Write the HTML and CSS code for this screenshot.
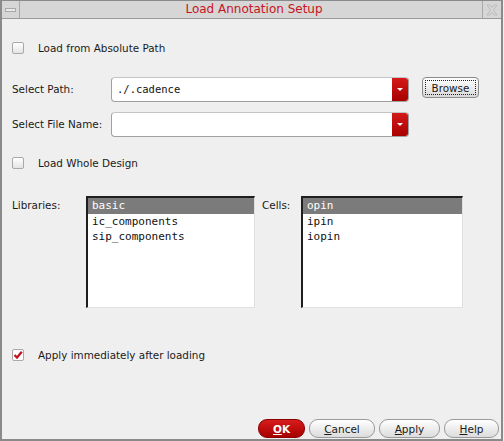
FILE: index.html
```html
<!DOCTYPE html>
<html>
<head>
<meta charset="utf-8">
<link rel="stylesheet" href="styles.css">
</head>
<body>
<div class="window">
  <div class="titlebar">
    <div class="tb-btn tb-left"><span class="min-glyph"></span></div>
    <div class="title">Load Annotation Setup</div>
    <div class="tb-btn tb-right">
      <svg width="12" height="12" viewBox="0 0 12 12"><path d="M1 1 L4 1 L6 3.5 L8 1 L11 1 L7.5 6 L11 11 L8 11 L6 8.5 L4 11 L1 11 L4.5 6 Z" fill="none" stroke="#bdbdbd" stroke-width="1"/></svg>
    </div>
  </div>
  <div class="content">
    <div class="check-row r1">
      <span class="checkbox"></span>
      <span class="label">Load from Absolute Path</span>
    </div>
    <div class="field-row r2">
      <span class="field-label">Select Path:</span>
      <div class="combo"><span class="combo-text">./.cadence</span><span class="combo-arrow"><span class="tri"></span></span></div>
      <button class="browse"><span class="focus">Browse</span></button>
    </div>
    <div class="field-row r3">
      <span class="field-label">Select File Name:</span>
      <div class="combo"><span class="combo-text"></span><span class="combo-arrow"><span class="tri"></span></span></div>
    </div>
    <div class="check-row r4">
      <span class="checkbox"></span>
      <span class="label">Load Whole Design</span>
    </div>
    <div class="lists-row">
      <span class="list-label lib-label">Libraries:</span>
      <div class="listbox lib-list">
        <div class="item sel">basic</div>
        <div class="item">ic_components</div>
        <div class="item">sip_components</div>
      </div>
      <span class="list-label cell-label">Cells:</span>
      <div class="listbox cell-list">
        <div class="item sel">opin</div>
        <div class="item">ipin</div>
        <div class="item">iopin</div>
      </div>
    </div>
    <div class="check-row r6">
      <span class="checkbox checked">
        <svg width="10" height="10" viewBox="0 0 10 10"><path d="M1.5 5 L4 7.5 L8.8 1.8" fill="none" stroke="#c8101a" stroke-width="2.2"/></svg>
      </span>
      <span class="label">Apply immediately after loading</span>
    </div>
    <div class="button-row">
      <button class="btn ok"><u>O</u>K</button>
      <button class="btn cancel"><u>C</u>ancel</button>
      <button class="btn apply"><u>A</u>pply</button>
      <button class="btn help"><u>H</u>elp</button>
    </div>
  </div>
</div>
</body>
</html>
```

FILE: styles.css
```css
html, body {
  margin: 0;
  padding: 0;
  background: #efefef;
}
.window {
  width: 503px;
  height: 441px;
  box-sizing: border-box;
  border-top: 1px solid #8a8a8a;
  border-left: 2px solid #8a8a8a;
  border-right: 2px solid #8a8a8a;
  border-bottom: 2px solid #8a8a8a;
  background: #efefef;
  display: flex;
  flex-direction: column;
  font-family: "DejaVu Sans", sans-serif;
  font-size: 10.4px;
  color: #1a1a1a;
}
.titlebar {
  height: 17px;
  border-bottom: 1px solid #9a9a9a;
  background: #d6d6d6;
  display: flex;
  align-items: stretch;
}
.tb-btn {
  width: 17px;
  display: flex;
  align-items: center;
  justify-content: center;
}
.tb-left { border-right: 1px solid #a8a8a8; }
.tb-right { border-left: 1px solid #a8a8a8; width: 18px; }
.min-glyph {
  width: 9px;
  height: 2px;
  border: 1px solid #a8a8a8;
  background: #e8e8e8;
  margin-top: 1px;
}
.title {
  flex: 1;
  text-align: center;
  color: #c8141e;
  font-size: 12px;
  line-height: 17px;
  padding-left: 6px;
}
.content {
  flex: 1;
  display: flex;
  flex-direction: column;
  padding-left: 10px;
}
.check-row {
  display: flex;
  align-items: center;
  height: 14px;
}
.r1 { margin-top: 22px; }
.r4 { margin-top: 19px; }
.r6 { margin-top: 40px; }
.checkbox {
  width: 10px;
  height: 10px;
  border: 1px solid #a9a9a9;
  border-radius: 2px;
  background: linear-gradient(#ffffff, #e4e4e4);
  margin-right: 14px;
  display: flex;
  align-items: center;
  justify-content: center;
}
.checkbox.checked { background: #ffffff; }
.field-row {
  display: flex;
  align-items: flex-start;
  height: 25px;
}
.r2 { margin-top: 22px; }
.r3 { margin-top: 10px; }
.field-label {
  width: 99px;
  line-height: 25px;
}
.combo {
  width: 298px;
  height: 25px;
  box-sizing: border-box;
  border: 1px solid #a0a0a0;
  border-top-color: #c4c4c4;
  border-radius: 4px;
  background: #ffffff;
  display: flex;
  overflow: hidden;
}
.combo-text {
  flex: 1;
  font-family: "DejaVu Sans Mono", monospace;
  font-size: 10.5px;
  line-height: 23px;
  padding-left: 5px;
  color: #111;
}
.combo-arrow {
  width: 16px;
  background: linear-gradient(#d41a1a, #a80000);
  display: flex;
  align-items: center;
  justify-content: center;
}
.tri {
  width: 0;
  height: 0;
  border-left: 3px solid transparent;
  border-right: 3px solid transparent;
  border-top: 3px solid #ffffff;
}
.browse {
  margin-left: 13px;
  width: 57px;
  height: 21px;
  padding: 2px;
  border: 1px solid #8a8a8a;
  border-radius: 4px;
  background: linear-gradient(#ffffff, #d8d8d8);
  font-family: "DejaVu Sans", sans-serif;
  font-size: 10.4px;
  color: #1a1a1a;
  display: flex;
}
.focus {
  flex: 1;
  border: 1px dotted #222;
  display: flex;
  align-items: center;
  justify-content: center;
}
.lists-row {
  margin-top: 26px;
  height: 112px;
  display: flex;
}
.list-label {
  padding-top: 3px;
  line-height: 12px;
}
.lib-label { width: 74px; }
.cell-label { width: 39px; margin-left: 7px; }
.listbox {
  box-sizing: border-box;
  height: 112px;
  background: #ffffff;
  border-left: 2px solid #1e1e1e;
  border-top: 2px solid #1e1e1e;
  border-right: 1px solid #e0e0e0;
  border-bottom: 1px solid #e0e0e0;
  font-family: "DejaVu Sans Mono", monospace;
  font-size: 11px;
  color: #111;
}
.lib-list { width: 169px; }
.cell-list { width: 162px; }
.item {
  height: 15px;
  line-height: 15px;
  padding-left: 4px;
}
.item.sel {
  background: #7b7b7b;
  color: #ffffff;
  height: 16px;
  line-height: 16px;
}
.button-row {
  margin-top: 57px;
  display: flex;
  justify-content: flex-end;
  gap: 4px;
  padding-right: 2px;
}
.btn {
  height: 19px;
  box-sizing: border-box;
  border: 1px solid #9a9a9a;
  border-radius: 9px;
  background: linear-gradient(#ffffff, #dcdcdc);
  font-family: "DejaVu Sans", sans-serif;
  font-size: 10.5px;
  color: #1a1a1a;
  padding: 0;
}
.ok {
  width: 47px;
  background: linear-gradient(#d81c1c, #a60000);
  border-color: #8a0000;
  color: #ffffff;
  font-weight: bold;
}
.cancel { width: 66px; }
.apply { width: 61px; }
.help { width: 55px; }
```
